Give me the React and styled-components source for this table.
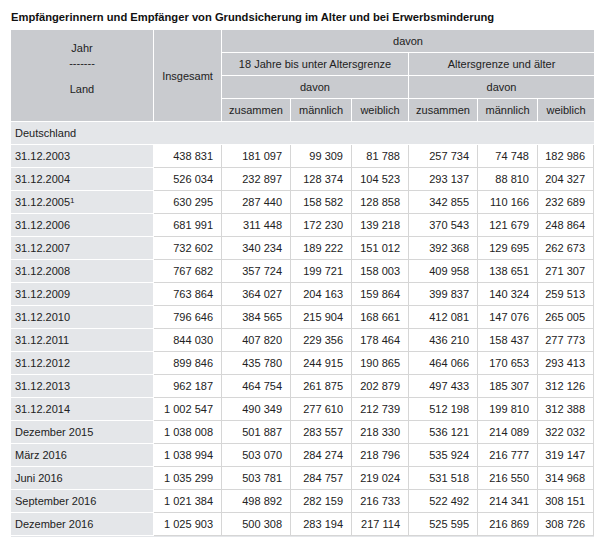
import React from "react";
import styled, { createGlobalStyle } from "styled-components";

const GlobalStyle = createGlobalStyle`
  body {
    margin: 0;
    background: #ffffff;
    font-family: "Liberation Sans", Arial, sans-serif;
    color: #222222;
  }
`;

const Page = styled.div`
  padding: 10px 6px 0 11px;
`;

const Title = styled.h3`
  margin: 0 0 6px 0;
  font-size: 11.2px;
  font-weight: bold;
  line-height: 14px;
  color: #111111;
`;

const Table = styled.table`
  border-collapse: separate;
  border-spacing: 0;
  width: 583px;
  table-layout: fixed;
  font-size: 11px;
`;

const Th = styled.th`
  background: #c9cbcf;
  font-weight: normal;
  color: #222;
  height: 22px;
  padding: 0 4px;
  text-align: center;
  vertical-align: middle;
  border-right: 1px solid #ffffff;
  border-bottom: 1px solid #ffffff;
  white-space: nowrap;
  &:last-child {
    border-right: 0;
  }
`;

const HeadStack = styled.div`
  display: flex;
  flex-direction: column;
  align-items: center;
  line-height: 13px;
  padding-bottom: 14px;
`;

const StackLine = styled.span`
  margin-top: ${(p) => p.gap || 0}px;
`;

const Label = styled.td`
  background: #e4e6e9;
  height: 22px;
  padding: 0 4px;
  border-right: 1px solid #ffffff;
  border-bottom: 1px solid #ffffff;
  white-space: nowrap;
  sup {
    font-size: 8px;
    vertical-align: top;
    line-height: 9px;
  }
`;

const Section = styled(Label)`
  border-right: 0;
`;

const Num = styled.td`
  height: 22px;
  padding: 0 8px 0 0;
  text-align: right;
  border-right: 1px solid #d6d6d6;
  border-bottom: 1px solid #d6d6d6;
  white-space: nowrap;
  background: #ffffff;
`;

const Foot = styled.td`
  background: #e4e6e9;
  height: 20px;
`;

const widths = [143, 68, 69, 61, 57, 69, 60, 56];

const rows = [
  ["31.12.2003", "438 831", "181 097", "99 309", "81 788", "257 734", "74 748", "182 986"],
  ["31.12.2004", "526 034", "232 897", "128 374", "104 523", "293 137", "88 810", "204 327"],
  ["31.12.2005", "630 295", "287 440", "158 582", "128 858", "342 855", "110 166", "232 689", true],
  ["31.12.2006", "681 991", "311 448", "172 230", "139 218", "370 543", "121 679", "248 864"],
  ["31.12.2007", "732 602", "340 234", "189 222", "151 012", "392 368", "129 695", "262 673"],
  ["31.12.2008", "767 682", "357 724", "199 721", "158 003", "409 958", "138 651", "271 307"],
  ["31.12.2009", "763 864", "364 027", "204 163", "159 864", "399 837", "140 324", "259 513"],
  ["31.12.2010", "796 646", "384 565", "215 904", "168 661", "412 081", "147 076", "265 005"],
  ["31.12.2011", "844 030", "407 820", "229 356", "178 464", "436 210", "158 437", "277 773"],
  ["31.12.2012", "899 846", "435 780", "244 915", "190 865", "464 066", "170 653", "293 413"],
  ["31.12.2013", "962 187", "464 754", "261 875", "202 879", "497 433", "185 307", "312 126"],
  ["31.12.2014", "1 002 547", "490 349", "277 610", "212 739", "512 198", "199 810", "312 388"],
  ["Dezember 2015", "1 038 008", "501 887", "283 557", "218 330", "536 121", "214 089", "322 032"],
  ["März 2016", "1 038 994", "503 070", "284 274", "218 796", "535 924", "216 777", "319 147"],
  ["Juni 2016", "1 035 299", "503 781", "284 757", "219 024", "531 518", "216 550", "314 968"],
  ["September 2016", "1 021 384", "498 892", "282 159", "216 733", "522 492", "214 341", "308 151"],
  ["Dezember 2016", "1 025 903", "500 308", "283 194", "217 114", "525 595", "216 869", "308 726"],
];

export default function App() {
  return (
    <Page>
      <GlobalStyle />
      <Title>
        Empfängerinnern und Empfänger von Grundsicherung im Alter und bei
        Erwerbsminderung
      </Title>
      <Table>
        <colgroup>
          {widths.map((w, i) => (
            <col key={i} style={{ width: w }} />
          ))}
        </colgroup>
        <thead>
          <tr>
            <Th rowSpan={4}>
              <HeadStack>
                <StackLine>Jahr</StackLine>
                <StackLine gap={2}>-------</StackLine>
                <StackLine gap={13}>Land</StackLine>
              </HeadStack>
            </Th>
            <Th rowSpan={4}>Insgesamt</Th>
            <Th colSpan={6}>davon</Th>
          </tr>
          <tr>
            <Th colSpan={3}>18 Jahre bis unter Altersgrenze</Th>
            <Th colSpan={3}>Altersgrenze und älter</Th>
          </tr>
          <tr>
            <Th colSpan={3}>davon</Th>
            <Th colSpan={3}>davon</Th>
          </tr>
          <tr>
            <Th>zusammen</Th>
            <Th>männlich</Th>
            <Th>weiblich</Th>
            <Th>zusammen</Th>
            <Th>männlich</Th>
            <Th>weiblich</Th>
          </tr>
        </thead>
        <tbody>
          <tr>
            <Section colSpan={8}>Deutschland</Section>
          </tr>
          {rows.map((r) => (
            <tr key={r[0]}>
              <Label>
                {r[0]}
                {r[8] && <sup>1</sup>}
              </Label>
              {r.slice(1, 8).map((v, i) => (
                <Num key={i}>{v}</Num>
              ))}
            </tr>
          ))}
        </tbody>
        <tfoot>
          <tr>
            <Foot colSpan={8} />
          </tr>
        </tfoot>
      </Table>
    </Page>
  );
}
